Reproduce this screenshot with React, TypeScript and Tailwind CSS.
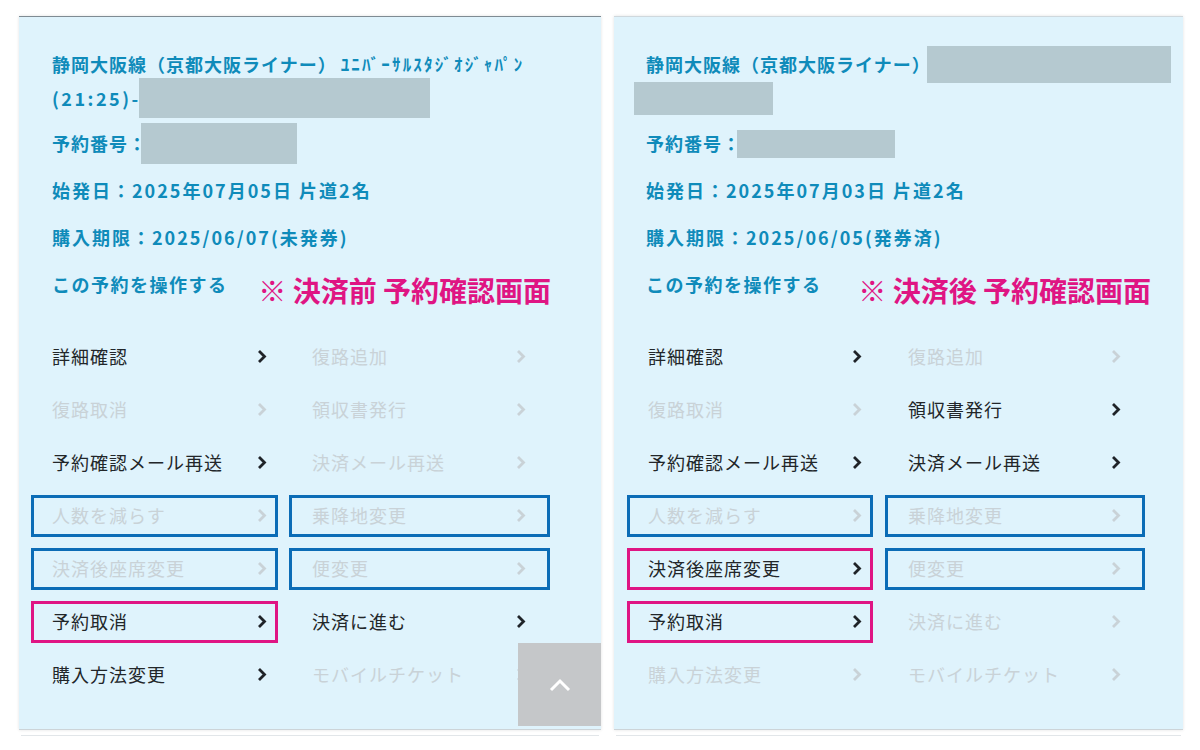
import React from 'react';

type Frame = 'none' | 'blue' | 'pink';
type Item = { label: string; on: boolean; frame?: Frame };

const LEFT_MENU: Item[][] = [
  [{ label: '詳細確認', on: true }, { label: '復路追加', on: false }],
  [{ label: '復路取消', on: false }, { label: '領収書発行', on: false }],
  [{ label: '予約確認メール再送', on: true }, { label: '決済メール再送', on: false }],
  [{ label: '人数を減らす', on: false, frame: 'blue' }, { label: '乗降地変更', on: false, frame: 'blue' }],
  [{ label: '決済後座席変更', on: false, frame: 'blue' }, { label: '便変更', on: false, frame: 'blue' }],
  [{ label: '予約取消', on: true, frame: 'pink' }, { label: '決済に進む', on: true }],
  [{ label: '購入方法変更', on: true }, { label: 'モバイルチケット', on: false }],
];

const RIGHT_MENU: Item[][] = [
  [{ label: '詳細確認', on: true }, { label: '復路追加', on: false }],
  [{ label: '復路取消', on: false }, { label: '領収書発行', on: true }],
  [{ label: '予約確認メール再送', on: true }, { label: '決済メール再送', on: true }],
  [{ label: '人数を減らす', on: false, frame: 'blue' }, { label: '乗降地変更', on: false, frame: 'blue' }],
  [{ label: '決済後座席変更', on: true, frame: 'pink' }, { label: '便変更', on: false, frame: 'blue' }],
  [{ label: '予約取消', on: true, frame: 'pink' }, { label: '決済に進む', on: false }],
  [{ label: '購入方法変更', on: false }, { label: 'モバイルチケット', on: false }],
];

const FRAME: Record<Frame, string> = {
  none: 'border-transparent',
  blue: 'border-[#0b6cb6]',
  pink: 'border-[#df1583]',
};

function Chevron({ on }: { on: boolean }) {
  return (
    <svg width="10" height="15" viewBox="0 0 10 15" className="shrink-0">
      <polyline points="2,2 7.5,7.5 2,13" fill="none" stroke={on ? '#1f2328' : '#c9d2d7'} strokeWidth="2.8" />
    </svg>
  );
}

function MenuCell({ item, left }: { item: Item; left: boolean }) {
  const frame = FRAME[item.frame ?? 'none'];
  return (
    <div className="h-[53px] flex items-center">
      <div
        className={`w-full h-[42px] border-[3px] ${frame} flex items-center justify-between ${
          left ? 'pl-[18px] pr-[8px]' : 'pl-[20px] pr-[21px]'
        }`}
      >
        <span className={`text-[18px] tracking-[1px] ${item.on ? 'text-[#222629]' : 'text-[#c9d2d7]'}`}>
          {item.label}
        </span>
        <Chevron on={item.on} />
      </div>
    </div>
  );
}

function Panel({
  width,
  padText,
  padGrid,
  cols,
  topLine,
  stampGap,
  title,
  number,
  date,
  limit,
  stamp,
  menu,
  scrollTop,
}: {
  width: string;
  padText: string;
  padGrid: string;
  cols: string;
  topLine: string;
  stampGap: string;
  title: React.ReactNode;
  number: React.ReactNode;
  date: string;
  limit: string;
  stamp: string;
  menu: Item[][];
  scrollTop?: boolean;
}) {
  return (
    <div className={`${width} shrink-0`}>
      <div
        className={`relative bg-[#dff3fc] border-t ${topLine} border-b border-b-[#cdd4d8] shadow-[0_0_3px_rgba(0,0,0,0.12)] pt-[30px] pb-[28px]`}
      >
        <div className={`${padText} text-[#0f8bba] font-bold text-[18px] tracking-[1px]`}>
          {title}
          <div className="h-[47px] flex items-center">
            <span>予約番号：</span>
            {number}
          </div>
          <div className="h-[47px] flex items-center tracking-[2px]">{date}</div>
          <div className="h-[47px] flex items-center tracking-[2px]">{limit}</div>
          <div className="h-[47px] flex items-center justify-between">
            <span className="tracking-[1.5px]">この予約を操作する</span>
            <span className={`text-[#df1583] text-[28px] tracking-[0px] mt-[10px] ${stampGap}`}>{stamp}</span>
          </div>
        </div>

        <div className={`${padGrid} mt-[22px] grid ${cols}`}>
          {menu.map((row, i) => (
            <React.Fragment key={i}>
              <MenuCell item={row[0]} left />
              <MenuCell item={row[1]} left={false} />
            </React.Fragment>
          ))}
        </div>

        {scrollTop && (
          <div className="absolute right-0 bottom-[3px] w-[83px] h-[83px] bg-[#c5c7c9] flex items-center justify-center">
            <svg width="22" height="14" viewBox="0 0 22 14">
              <polyline points="2,12 11,3 20,12" fill="none" stroke="#ffffff" strokeWidth="3" />
            </svg>
          </div>
        )}
      </div>
      <div className="mx-[2px] mt-[5px] h-px bg-[#e2e6e9]" />
    </div>
  );
}

export default function App() {
  const font = { fontFamily: '"Noto Sans CJK JP", "Noto Sans", sans-serif' };

  const leftTitle = (
    <div className="mb-[5px]">
      <div className="h-[34px] flex items-center whitespace-nowrap">
        <span>静岡大阪線（京都大阪ライナー）</span>
        <span className="ml-[4px] text-[17px] tracking-[2.2px]">ﾕﾆﾊﾞｰｻﾙｽﾀｼﾞｵｼﾞｬﾊﾟﾝ</span>
      </div>
      <div className="h-[34px] flex items-center">
        <span className="tracking-[2.5px]">(21:25)-</span>
        <div className="w-[291px] h-[40px] bg-[#b5c9d0] shrink-0 ml-[-2px]" />
      </div>
    </div>
  );

  const rightTitle = (
    <div className="mb-[5px]">
      <div className="h-[34px] flex items-center whitespace-nowrap">
        <span>静岡大阪線（京都大阪ライナー）</span>
        <div className="ml-[-4px] w-[244px] h-[37px] bg-[#b5c9d0] shrink-0" />
      </div>
      <div className="h-[34px] flex items-center">
        <div className="ml-[-12px] w-[139px] h-[33px] bg-[#b5c9d0]" />
      </div>
    </div>
  );

  return (
    <div className="w-[1200px] h-[750px] bg-white overflow-hidden" style={font}>
      <div className="flex pt-[16px] pl-[19px] gap-[13px]">
        <Panel
          width="w-[582px]"
          padText="pl-[33px]"
          padGrid="pl-[12px]"
          cols="grid-cols-[247px_261px] gap-x-[11px]"
          topLine="border-t-[#7f8b93]"
          stampGap="mr-[50px]"
          title={leftTitle}
          number={<div className="w-[156px] h-[41px] bg-[#b5c9d0] ml-[-6px]" />}
          date="始発日：2025年07月05日 片道2名"
          limit="購入期限：2025/06/07(未発券)"
          stamp="※ 決済前 予約確認画面"
          menu={LEFT_MENU}
          scrollTop
        />
        <Panel
          width="w-[569px]"
          padText="pl-[32px]"
          padGrid="pl-[13px]"
          cols="grid-cols-[246px_260px] gap-x-[12px]"
          topLine="border-t-[#cfd8dd]"
          stampGap="mr-[32px]"
          title={rightTitle}
          number={<div className="w-[158px] h-[28px] bg-[#b5c9d0] ml-[-4px]" />}
          date="始発日：2025年07月03日 片道2名"
          limit="購入期限：2025/06/05(発券済)"
          stamp="※ 決済後 予約確認画面"
          menu={RIGHT_MENU}
        />
      </div>
    </div>
  );
}
